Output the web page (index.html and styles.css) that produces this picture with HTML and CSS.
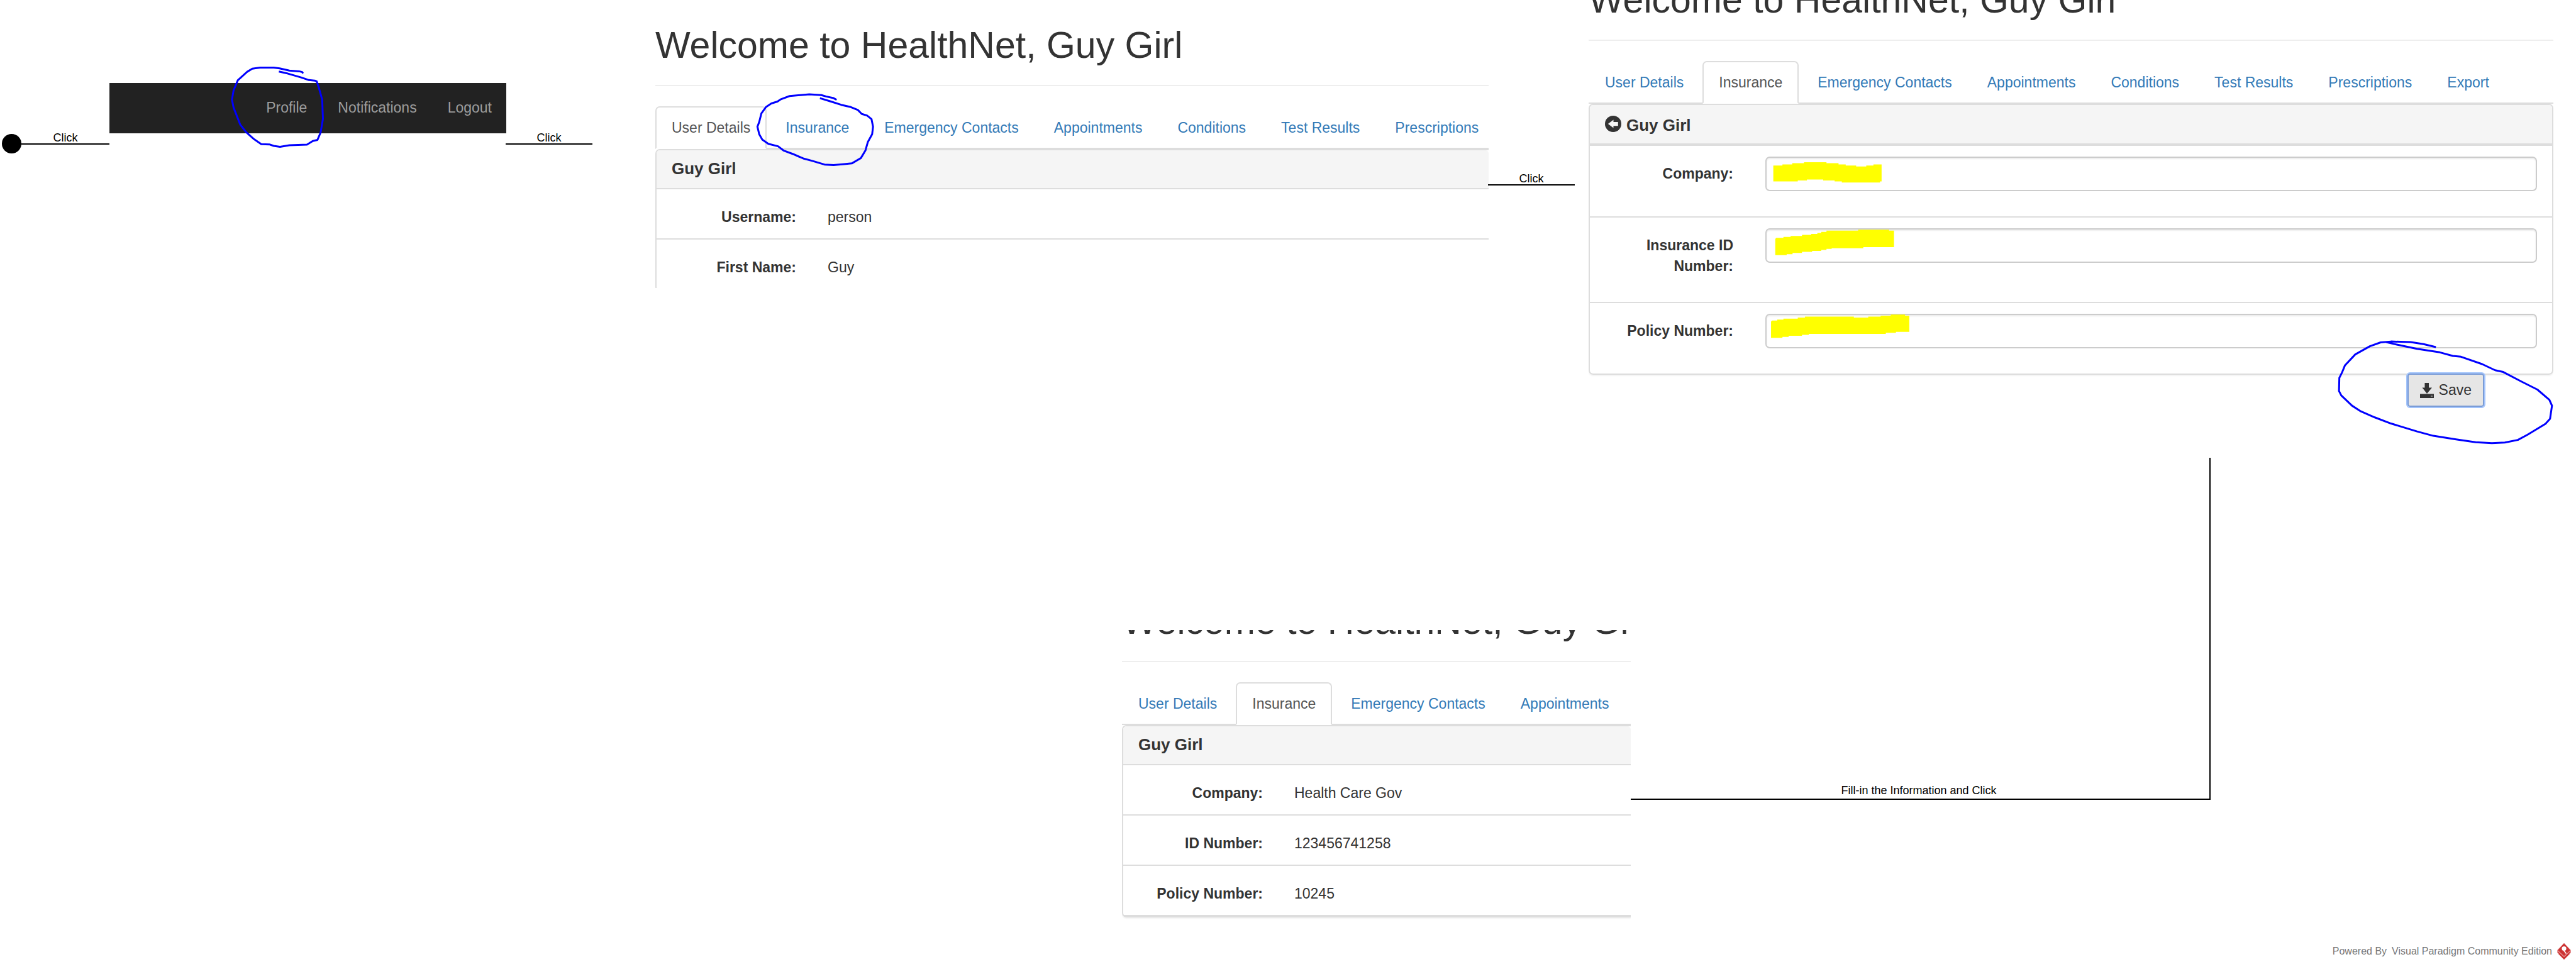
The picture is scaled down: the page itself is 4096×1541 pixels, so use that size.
FILE: index.html
```html
<!DOCTYPE html>
<html lang="en">
<head>
<meta charset="utf-8">
<title>HealthNet insurance update flow</title>
<link rel="stylesheet" href="styles.css">
</head>
<body>
<main class="canvas">

  <span class="start-node"></span>
  <div class="connector connector-start"><span>Click</span></div>

  <section class="node node-menu">
    <nav class="navbar">
      <a href="#profile">Profile</a>
      <a href="#notifications">Notifications</a>
      <a href="#logout">Logout</a>
    </nav>
    <svg class="ink ink-profile" viewBox="590 140 240 720" preserveAspectRatio="none" aria-hidden="true">
      <path d="M775 200L773 188L765 181L740 175L715 155L700 148H665L645 158L632 185L608 260L597 350L593 430L597 500L605 570L614 650L630 720L650 780L668 822L690 826L700 838L716 846L740 832L785 827L800 795L812 785L820 720L826 600L824 430L815 320L810 270L805 263L790 258L770 235L735 200L713 183"/>
    </svg>
  </section>

  <div class="connector connector-profile"><span>Click</span></div>

  <section class="node node-details">
    <div class="screen screen-wide">
      <h1 class="page-header">Welcome to HealthNet, Guy Girl</h1>
      <nav class="tabs">
        <a class="tab tab-active" href="#details">User Details</a>
        <a class="tab" href="#insurance">Insurance</a>
        <a class="tab" href="#contacts">Emergency Contacts</a>
        <a class="tab" href="#appointments">Appointments</a>
        <a class="tab" href="#conditions">Conditions</a>
        <a class="tab" href="#results">Test Results</a>
        <a class="tab" href="#prescriptions">Prescriptions</a>
      </nav>
      <div class="panel">
        <h2 class="panel-heading">Guy Girl</h2>
        <dl class="rows">
          <div class="row"><dt>Username:</dt><dd>person</dd></div>
          <div class="row"><dt>First Name:</dt><dd>Guy</dd></div>
        </dl>
      </div>
    </div>
    <svg class="ink ink-insurance" viewBox="355 485 400 390" preserveAspectRatio="none" aria-hidden="true">
      <path d="M625 524L615 515L590 506L575 499L535 495L470 504L440 522L430 533L410 543L392 562L377 595L370 640L364 665L370 705L380 733L400 755L432 768L450 790L480 808L515 832L545 845L585 864L615 867L650 862L675 858L705 830L720 790L728 745L742 705L745 665L740 625L725 606L708 598L695 577L672 562L640 550L605 532L570 515"/>
    </svg>
  </section>

  <div class="connector connector-insurance"><span>Click</span></div>

  <section class="node node-form">
    <div class="screen screen-form">
      <h1 class="page-header">Welcome to HealthNet, Guy Girl</h1>
      <nav class="tabs">
        <a class="tab" href="#details">User Details</a>
        <a class="tab tab-active" href="#insurance">Insurance</a>
        <a class="tab" href="#contacts">Emergency Contacts</a>
        <a class="tab" href="#appointments">Appointments</a>
        <a class="tab" href="#conditions">Conditions</a>
        <a class="tab" href="#results">Test Results</a>
        <a class="tab" href="#prescriptions">Prescriptions</a>
        <a class="tab" href="#export">Export</a>
      </nav>
      <form>
        <div class="panel">
          <h2 class="panel-heading panel-heading-back">
            <svg class="icon-back" viewBox="0 0 16 16" aria-hidden="true"><circle cx="8" cy="8" r="8" fill="#333"/><path d="M3 8L8.300 4V6.100H12.800V10H8.300V12Z" fill="#f5f5f5"/></svg>
            Guy Girl
          </h2>
          <div class="field"><label for="company">Company:</label><input id="company" type="text"></div>
          <div class="field"><label for="insurance-id">Insurance ID Number:</label><input id="insurance-id" type="text"></div>
          <div class="field"><label for="policy">Policy Number:</label><input id="policy" type="text"></div>
        </div>
        <div class="actions">
          <button class="save" type="button">
            <svg class="icon-save" viewBox="0 0 22 24" aria-hidden="true"><path d="M7.500 0H14V7.500H19L11 17L3.500 7.500H7.500ZM0 17.500H22V24H0Z" fill="#333"/><path d="M17 21H20" stroke="#888" stroke-width="2"/></svg>
            Save
          </button>
        </div>
      </form>
    </div>
    <svg class="marker" viewBox="630 640 430 730" preserveAspectRatio="none" aria-hidden="true">
      <path d="M639 663H667V659H697V654H733V650H802V654H839V659H861V663H893V667H924V663H946V659H971V727H966V731H849V727H827V723H792V719H742V723H714V727H639Z"/>
      <path d="M645 957L648 953H670V949H692V945H727V941H755V937H774V933H786V929H802V924H899V920H994V924H1009V990H915V994H818V997H802V1001H786V1005H758V1009H727V1013H698V1018H680V1022H645Z"/>
      <path d="M632 1288L635 1284H651V1280H670V1276H714V1272H736V1268H886V1272H930V1268H968V1264H999V1260H1043V1264H1056V1329H1015V1333H984V1337H748V1341H727V1345H686V1349H667V1353H632Z"/>
    </svg>
    <svg class="ink ink-save" viewBox="830 1155 675 365" preserveAspectRatio="none" aria-hidden="true">
      <path d="M1138 1185L1100 1175L1060 1168L1000 1166L968 1169L935 1182L890 1210L858 1248L850 1270L841 1290L840 1335L847 1350L880 1385L905 1403L950 1425L1000 1446L1080 1473L1130 1488L1200 1500L1260 1510L1310 1513L1350 1511L1390 1502L1420 1484L1475 1447L1489 1430L1493 1400L1495 1385L1487 1365L1450 1330L1400 1302L1345 1270L1320 1264L1280 1243L1215 1218L1190 1215L1150 1203L1080 1191L1020 1177L985 1168"/>
    </svg>
  </section>

  <div class="connector connector-save"><span>Fill-in the Information and Click</span></div>

  <section class="node node-result">
    <div class="screen screen-wide screen-result">
      <h1 class="page-header">Welcome to HealthNet, Guy Girl</h1>
      <nav class="tabs">
        <a class="tab" href="#details">User Details</a>
        <a class="tab tab-active" href="#insurance">Insurance</a>
        <a class="tab" href="#contacts">Emergency Contacts</a>
        <a class="tab" href="#appointments">Appointments</a>
      </nav>
      <div class="panel">
        <h2 class="panel-heading">Guy Girl</h2>
        <dl class="rows">
          <div class="row"><dt>Company:</dt><dd>Health Care Gov</dd></div>
          <div class="row"><dt>ID Number:</dt><dd>123456741258</dd></div>
          <div class="row"><dt>Policy Number:</dt><dd>10245</dd></div>
        </dl>
      </div>
    </div>
  </section>

  <footer class="credit">
    <span>Powered By</span>
    <span>Visual Paradigm Community Edition</span>
    <svg class="logo" viewBox="0 0 22 26" aria-hidden="true">
      <path d="M11 0L22 11V15L11 26L0 15V11Z" fill="#e9a0a0"/>
      <path d="M11 0L21 11L11 20.500L1 11Z" fill="#cc3333"/>
      <path d="M1 13.500L11 23L21 13.500M2.500 16.500L11 25L19.500 16.500" fill="none" stroke="#cc3333" stroke-width="1.300"/>
      <circle cx="11" cy="8.500" r="3.600" fill="#fff"/>
      <path d="M10.500 11.500L14.500 16.500" stroke="#fff" stroke-width="1.600"/>
    </svg>
  </footer>
</main>
</body>
</html>
```
FILE: styles.css
```css
* {
  box-sizing: border-box;
}

body {
  margin: 0;
  background: #fff;
  color: #333;
  font: 23px/33px "Liberation Sans", Arial, sans-serif;
}

a {
  color: #337ab7;
  text-decoration: none;
}

/* Diagram canvas: nodes and connectors are placed freely */
.canvas {
  position: relative;
  display: flex;
  flex-direction: column;
  min-height: 100vh;
  overflow: hidden;
}

.node,
.connector,
.start-node,
.ink,
.marker {
  position: absolute;
}

.start-node {
  left: 3px;
  top: 213px;
  width: 31px;
  height: 31px;
  border-radius: 50%;
  background: #000;
}

.node-menu {
  left: 174px;
  top: 132px;
  width: 631px;
}

.node-details {
  left: 1042px;
  top: 40px;
  width: 1325px;
}

.node-form {
  left: 2526px;
  top: 0;
  width: 1534px;
}

.node-result {
  left: 1784px;
  top: 1002px;
  width: 809px;
}

/* Connectors */
.connector {
  display: flex;
  align-items: flex-end;
  justify-content: center;
  border-bottom: 2px solid #000;
  color: #000;
  font-size: 18px;
  line-height: 18px;
}

.connector-start {
  left: 34px;
  top: 210px;
  width: 140px;
}

.connector-profile {
  left: 804px;
  top: 210px;
  width: 138px;
}

.connector-insurance {
  left: 2366px;
  top: 275px;
  width: 138px;
}

.connector-save {
  left: 2593px;
  top: 728px;
  width: 922px;
  height: 544px;
  padding: 0 4px 4px 0;
  border-right: 2px solid #000;
}

/* Hand-drawn marks */
.ink path {
  fill: none;
  stroke: #00f;
  stroke-width: 3px;
  stroke-linejoin: round;
  vector-effect: non-scaling-stroke;
}

.ink {
  overflow: visible;
  pointer-events: none;
}

.ink-profile {
  left: 193px;
  top: -26px;
  width: 149px;
  height: 130px;
}

.ink-insurance {
  left: 158px;
  top: 107px;
  width: 193px;
  height: 118px;
}

.ink-save {
  left: 1188px;
  top: 538px;
  width: 349px;
  height: 170px;
}

.marker {
  left: 289px;
  top: 254px;
  width: 223px;
  height: 290px;
  fill: #ff0;
}

/* Top menu */
.navbar {
  display: flex;
  justify-content: flex-end;
  gap: 49px;
  padding: 23px 23px 24px;
  background: #222;
}

.navbar a {
  color: #9d9d9d;
}

/* Captured screens */
.screen {
  overflow: hidden;
}

.node-details .screen {
  height: 418px;
}

.screen-form .page-header {
  margin-top: -32px;
}

.screen-result .page-header {
  margin-top: -46px;
}

.screen-form,
.screen-result {
  padding-bottom: 4px;
}

.page-header {
  margin: 0 0 32px;
  padding-bottom: 31px;
  border-bottom: 2px solid #eee;
  font-size: 59px;
  font-weight: 400;
  line-height: 64px;
  white-space: nowrap;
}

.tabs {
  display: flex;
  gap: 4px;
  border-bottom: 2px solid #ddd;
}

.tab {
  margin-bottom: -2px;
  padding: 16px 24px 15px;
  border: 2px solid transparent;
  border-radius: 7px 7px 0 0;
  white-space: nowrap;
}

.tab-active {
  border-color: #ddd;
  border-bottom-color: #fff;
  background: #fff;
  color: #555;
}

.panel {
  border: 2px solid #ddd;
  border-radius: 7px;
  box-shadow: 0 2px 2px rgba(0, 0, 0, 0.05);
}

.screen-wide .panel {
  border-right: 0;
  border-radius: 7px 0 0 7px;
}

.panel-heading {
  margin: 0;
  padding: 15px 24px 16px;
  border-radius: 5px 5px 0 0;
  background: #f5f5f5;
  font-size: 26px;
  line-height: 29px;
}

.panel-heading-back {
  display: flex;
  align-items: center;
  gap: 8px;
  padding: 17px 24px 14px;
  border-bottom: 2px solid #ddd;
}

.icon-back {
  width: 26px;
  height: 26px;
  margin-bottom: 4px;
}

.rows {
  margin: 0;
  border-bottom: 2px solid #ddd;
}

.row {
  display: grid;
  grid-template-columns: 222px 1fr;
  column-gap: 50px;
  padding: 28px 0 17px;
  border-top: 2px solid #ddd;
}

.row dt {
  font-weight: 700;
  text-align: right;
}

.row dd {
  margin: 0;
}

.field {
  display: grid;
  grid-template-columns: 204px 1fr;
  column-gap: 51px;
  align-items: start;
  padding: 17px 24px 40px;
  border-top: 2px solid #ddd;
}

.field label {
  padding-top: 11px;
  font-weight: 700;
  text-align: right;
}

.field input {
  width: 100%;
  height: 55px;
  padding: 8px 20px;
  border: 2px solid #ccc;
  border-radius: 7px;
  background: #fff;
  box-shadow: inset 0 2px 2px rgba(0, 0, 0, 0.075);
  color: #555;
  font: inherit;
}

.actions {
  display: flex;
  justify-content: flex-end;
  margin-top: -2px;
  padding-right: 110px;
}

.save {
  display: flex;
  align-items: center;
  gap: 8px;
  padding: 8px 18px;
  border: 2px solid #7b9cd6;
  border-radius: 4px;
  outline: 2px solid #a3c4fb;
  background: #e6e6e6;
  color: #333;
  font: inherit;
}

.icon-save {
  width: 22px;
  height: 24px;
}

/* Credit line */
.credit {
  display: flex;
  align-items: center;
  justify-content: flex-end;
  gap: 8px;
  margin-top: auto;
  padding: 0 8px 15px;
  color: #777;
  font-size: 16px;
  line-height: 26px;
}

.logo {
  width: 22px;
  height: 26px;
}
```
